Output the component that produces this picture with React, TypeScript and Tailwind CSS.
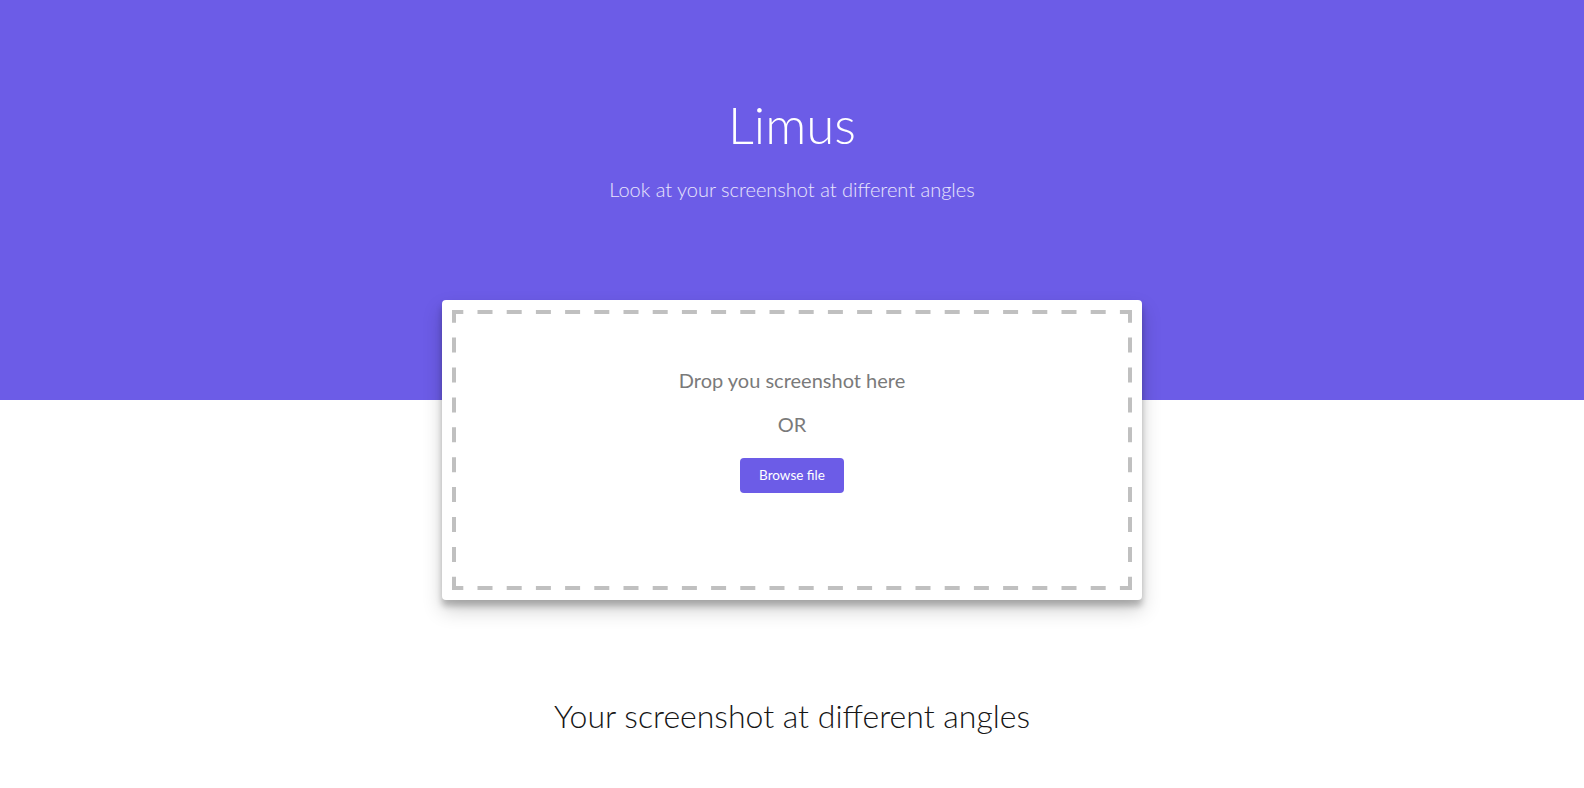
import React from "react";

function DashedFrame() {
  return (
    <svg
      className="absolute inset-0 pointer-events-none"
      width="680"
      height="280"
      viewBox="0 0 680 280"
    >
      <g stroke="#c0c0c0" strokeWidth="4" fill="none">
        <line x1="0" y1="2" x2="680" y2="2" strokeDasharray="15 14.2" strokeDashoffset="3.7" />
        <line x1="0" y1="278" x2="680" y2="278" strokeDasharray="15 14.2" strokeDashoffset="3.7" />
        <line x1="2" y1="0" x2="2" y2="280" strokeDasharray="15 14.9" strokeDashoffset="2.3" />
        <line x1="678" y1="0" x2="678" y2="280" strokeDasharray="15 14.9" strokeDashoffset="2.3" />
      </g>
    </svg>
  );
}

export default function App() {
  return (
    <div className="min-h-screen bg-white font-['Lato','Noto_Sans',sans-serif]">
      <header className="h-[400px] bg-[#6c5ce7] flex flex-col items-center pt-[99px]">
        <h1 className="text-[51px] leading-none font-light text-white">Limus</h1>
        <p className="mt-[29px] text-[20px] leading-none font-light text-white/85">
          Look at your screenshot at different angles
        </p>
      </header>
      <section className="relative z-10 -mt-[100px] flex justify-center">
        <div className="w-[700px] h-[300px] bg-white rounded-[4px] p-[10px] shadow-[0_10px_20px_rgba(0,0,0,0.19),0_6px_6px_rgba(0,0,0,0.23)]">
          <div className="relative h-full flex flex-col items-center pt-[60px]">
            <DashedFrame />
            <p className="text-[20px] leading-none text-[#7a7a7a]">Drop you screenshot here</p>
            <p className="mt-[24px] text-[20px] leading-none text-[#7a7a7a]">OR</p>
            <button className="mt-[24px] w-[104px] h-[35px] rounded-[4px] bg-[#6c5ce7] text-white text-[13.5px] leading-none">
              Browse file
            </button>
          </div>
        </div>
      </section>
      <h2 className="mt-[100px] text-center text-[32px] leading-none font-light text-[#161616]">
        Your screenshot at different angles
      </h2>
    </div>
  );
}
